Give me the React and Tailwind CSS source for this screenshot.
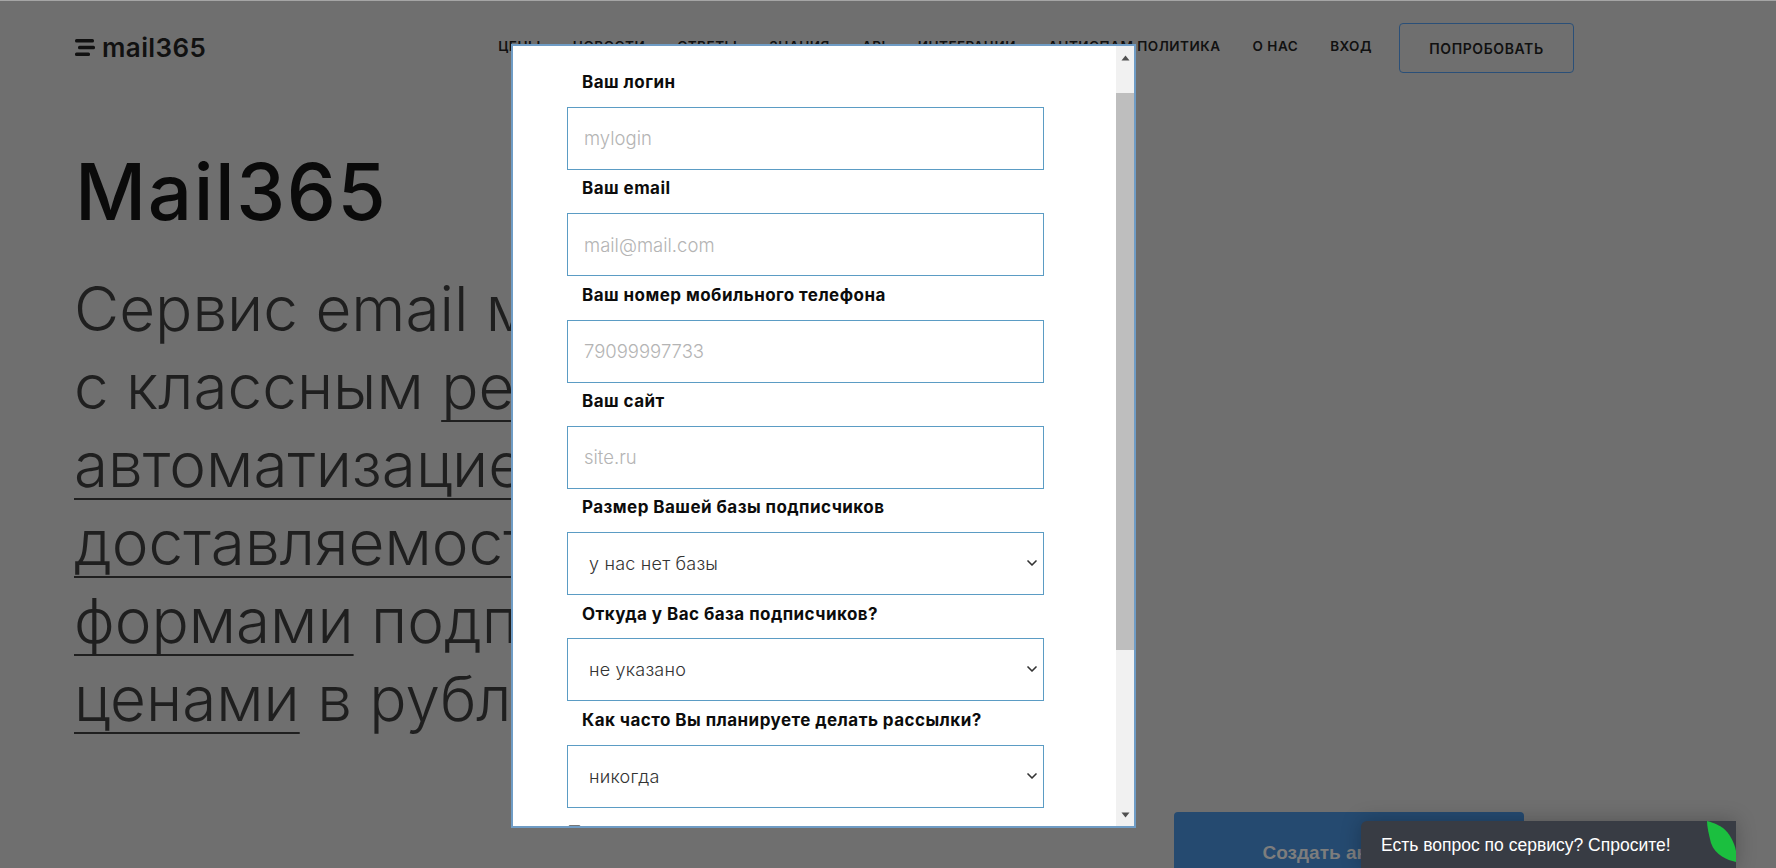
import React from 'react';
import { ChevronDown } from 'lucide-react';

const navItems = ['Цены', 'Новости', 'Ответы', 'Знания', 'API', 'Интеграции', 'Антиспам политика', 'О нас', 'Вход'];

const fields = [
  { label: 'Ваш логин', placeholder: 'mylogin' },
  { label: 'Ваш email', placeholder: 'mail@mail.com' },
  { label: 'Ваш номер мобильного телефона', placeholder: '79099997733' },
  { label: 'Ваш сайт', placeholder: 'site.ru' },
  { label: 'Размер Вашей базы подписчиков', value: 'у нас нет базы' },
  { label: 'Откуда у Вас база подписчиков?', value: 'не указано' },
  { label: 'Как часто Вы планируете делать рассылки?', value: 'никогда' },
];

const Logo = () => (
  <div className="flex items-center gap-[7px]">
    <svg width="20" height="17" viewBox="0 0 20 17" className="text-[#111]">
      <rect x="0" y="0" width="19" height="3.4" rx="1.5" fill="currentColor" />
      <rect x="3" y="6.8" width="17" height="3.4" rx="1.5" fill="currentColor" />
      <rect x="0" y="13.6" width="15" height="3.4" rx="1.5" fill="currentColor" />
    </svg>
    <span className="text-[26px] leading-none font-semibold text-[#111] tracking-[0.4px]">mail365</span>
  </div>
);

const Field = ({ field }) => (
  <div>
    <div className="h-[43.3px] pb-[5px] pl-[15px] flex items-center text-[17px] font-bold text-[#0c0c0c] tracking-[0.45px] whitespace-nowrap">
      {field.label}
    </div>
    {field.placeholder ? (
      <input
        placeholder={field.placeholder}
        className="block w-[477px] h-[63px] border border-[#5b9cc4] pl-[16px] text-[18.5px] font-light outline-none placeholder:text-[#b4b4b4]"
      />
    ) : (
      <div className="relative w-[477px] h-[63px]">
        <select className="block w-full h-full appearance-none bg-white border border-[#5b9cc4] pl-[21px] text-[18px] font-light tracking-[0.2px] text-[#333] outline-none">
          <option>{field.value}</option>
        </select>
        <ChevronDown className="absolute right-[4px] top-[23px] w-[16px] h-[16px] text-[#333]" strokeWidth={2.5} />
      </div>
    )}
  </div>
);

const underlined = 'underline decoration-2 underline-offset-[11px] [text-decoration-skip-ink:none]';

const App = () => {
  return (
    <div className="relative w-[1776px] h-[868px] overflow-hidden bg-[#6f6f6f] border-t border-[#a5a5a5] font-[Inter,sans-serif]">
      {/* Page behind the dialog */}
      <header className="flex items-center justify-between pl-[75px] pr-[202px] pt-[22px]">
        <div className="-mt-[1px]">
          <Logo />
        </div>
        <div className="flex items-center">
          <nav className="flex items-center gap-[32px] -mt-[4px] text-[13.5px] font-semibold uppercase text-[#111] tracking-[0.5px]">
            {navItems.map((item) => (
              <span key={item}>{item}</span>
            ))}
          </nav>
          <button className="ml-[27px] w-[175px] h-[50px] rounded-[4px] border border-[#2a4f78] text-[14px] font-semibold uppercase text-[#111] tracking-[0.6px]">
            Попробовать
          </button>
        </div>
      </header>

      <main className="flex pl-[74px]">
        <div className="pt-[74px]">
          <h1 className="pl-[1px] text-[78px] leading-[90px] font-medium text-[#0a0a0a] tracking-[1.6px]">Mail365</h1>
          <p className="mt-[33px] text-[62px] leading-[78px] font-light text-[#1f1f1f] whitespace-nowrap">
            Сервис email маркетинга
            <br />с классным <span className={underlined}>редактором</span>,
            <br />
            <span className={underlined}>автоматизацией</span>, высокой
            <br />
            <span className={underlined}>доставляемостью</span>, удобными
            <br />
            <span className={underlined}>формами</span> подписки и
            <br />
            <span className={underlined}>ценами</span> в рублях
          </p>
        </div>
        <button className="absolute left-[1174px] top-[811px] w-[350px] h-[80px] rounded-[4px] bg-[#254a70] pt-[2px] pr-[18px] text-[19px] font-bold font-['Liberation_Sans',Arial,sans-serif] text-[#7d7d7d]">
          Создать аккаунт
        </button>
      </main>

      {/* Dialog */}
      <div className="absolute left-[511px] top-[43px] w-[625px] h-[784px] bg-white border-2 border-[#6f9cc5] flex">
        <div className="flex-1 overflow-hidden pl-[54px] pt-[17.7px]">
          {fields.map((field) => (
            <Field key={field.label} field={field} />
          ))}
          <label className="mt-[16px] flex items-start gap-[8px] pl-[1px] text-[15px] text-[#222]">
            <span className="block w-[13px] h-[13px] mt-[1px] border border-[#777] rounded-[2px] bg-[#eee]" />
            Пользовательское соглашение
          </label>
        </div>
        <div className="w-[18px] bg-[#f1f1f1] flex flex-col">
          <div className="h-[23px] flex items-center justify-center">
            <svg width="9" height="6" viewBox="0 0 9 6"><path d="M4.5 0.5 L8.5 5.5 L0.5 5.5 Z" fill="#505050" /></svg>
          </div>
          <div className="mt-[24px] h-[557px] bg-[#bebebe]" />
          <div className="mt-auto h-[23px] flex items-center justify-center">
            <svg width="9" height="6" viewBox="0 0 9 6"><path d="M4.5 5.5 L8.5 0.5 L0.5 0.5 Z" fill="#505050" /></svg>
          </div>
        </div>
      </div>

      {/* Chat widget */}
      <div className="absolute right-[40px] bottom-0 w-[375px] h-[47px] bg-[#383c44] rounded-tl-[6px] shadow-[0_0_20px_rgba(0,0,0,0.25)] pl-[20px] pb-[4px] flex items-start">
        <span className="mt-[12px] text-[17.5px] leading-[24px] text-white font-['Liberation_Sans',Arial,sans-serif]">
          Есть вопрос по сервису? Спросите!
        </span>
        <svg width="29" height="41" viewBox="0 0 29 41" className="absolute right-0 top-0">
          <path d="M0 0 C8 2 13 5 16 7 C22 12 27 20 29 30 L29 41 C20 39 8 34 4 22 C2 14 0 6 0 0 Z" fill="#1bbf3f" />
        </svg>
      </div>
    </div>
  );
};

export default App;
